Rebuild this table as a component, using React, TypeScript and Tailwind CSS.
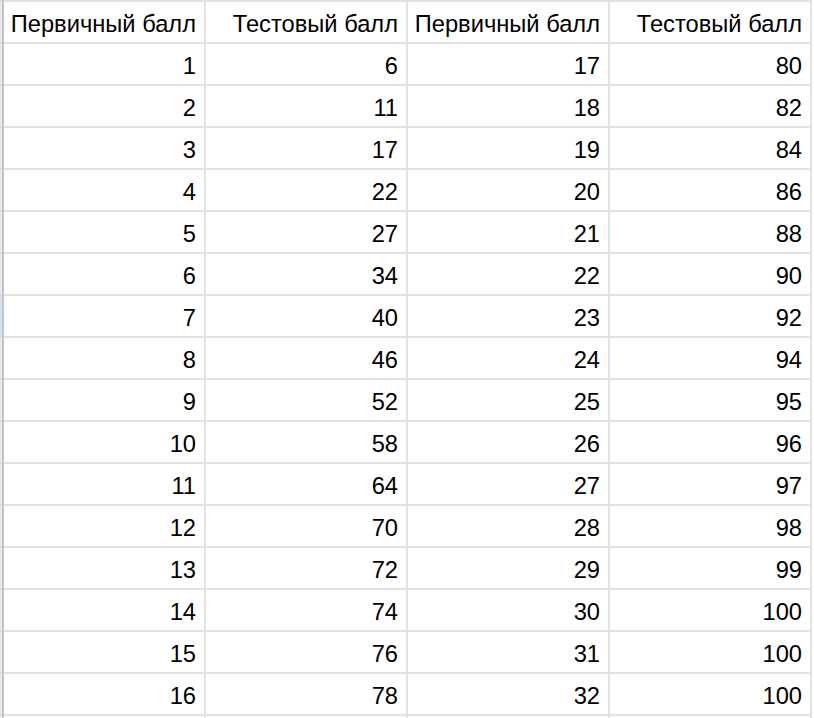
import React from "react";

const col2 = [6, 11, 17, 22, 27, 34, 40, 46, 52, 58, 64, 70, 72, 74, 76, 78];
const col4 = [80, 82, 84, 86, 88, 90, 92, 94, 95, 96, 97, 98, 99, 100, 100, 100];

const rows: (string | number)[][] = [
  ["Первичный балл", "Тестовый балл", "Первичный балл", "Тестовый балл"],
  ...col2.map((v, i) => [i + 1, v, i + 17, col4[i]]),
  ["", "", "", ""],
];

export default function App() {
  return (
    <div
      className="w-[814px] h-[718px] overflow-hidden bg-white flex text-black"
      style={{ fontFamily: '"Liberation Sans", Arial, sans-serif' }}
    >
      <div className="w-[2px] flex flex-col">
        {rows.map((_, r) => (
          <div
            key={r}
            className={`h-[42px] shrink-0 border-t-2 border-[#dcdcdc] ${
              r === 7 ? "bg-[#d3e3fd]" : "bg-[#e8e8e8]"
            }`}
          />
        ))}
      </div>
      <div className="w-[2px] bg-[#c4c4c4]" />
      <div className="flex flex-col">
        {rows.map((row, r) => (
          <div key={r} className="flex h-[42px] shrink-0">
            {row.map((cell, c) => (
              <div
                key={c}
                className="w-[202px] h-[42px] box-border border-t-2 border-r-2 border-[#e2e2e2] flex items-end justify-end pr-[8px] pb-[4px] text-[23.7px] leading-[28px] whitespace-nowrap"
              >
                {cell}
              </div>
            ))}
          </div>
        ))}
      </div>
    </div>
  );
}
